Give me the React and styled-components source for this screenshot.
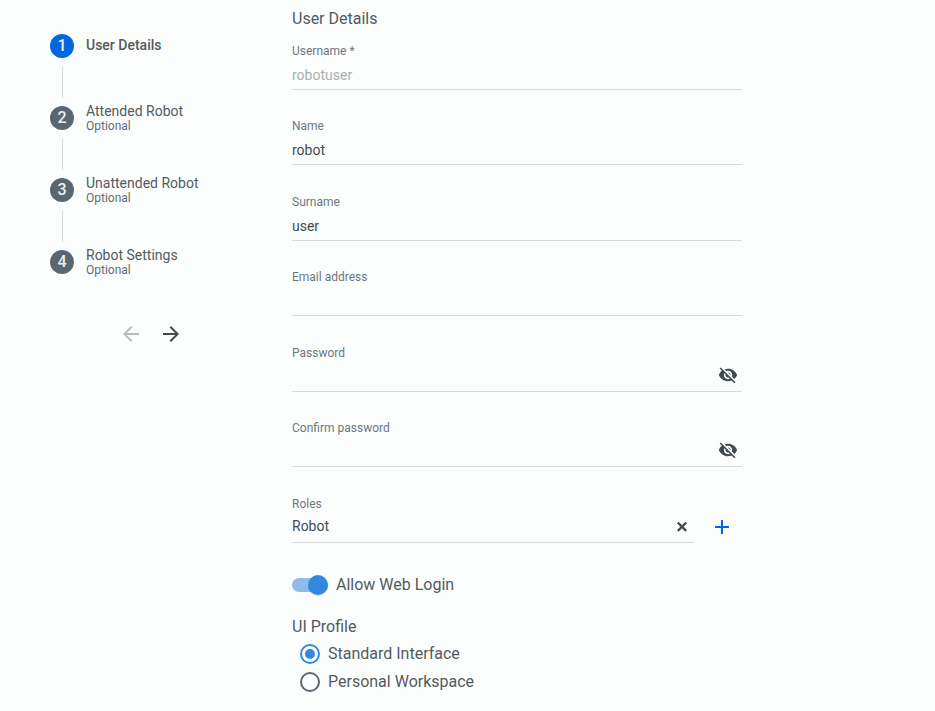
import React from "react";
import styled, { createGlobalStyle } from "styled-components";

const GlobalStyle = createGlobalStyle`
  * { box-sizing: border-box; }
  body {
    margin: 0;
    background: #fcfefd;
    color: #525a60;
    font-family: Roboto, "Liberation Sans", sans-serif;
    overflow: hidden;
  }
`;

const Page = styled.main`
  display: grid;
  grid-template-columns: 242px 450px;
  column-gap: 0;
  width: 935px;
  height: 711px;
  padding-left: 50px;
`;

const Sidebar = styled.aside`
  padding-top: 34px;
`;

const Steps = styled.ol`
  margin: 0;
  padding: 0;
  list-style: none;
`;

const Step = styled.li`
  display: grid;
  grid-template-columns: 24px 1fr;
  grid-template-rows: 24px 32px;
  column-gap: 12px;
  row-gap: 8px;
  height: 72px;
`;

const StepNumber = styled.span`
  display: flex;
  align-items: center;
  justify-content: center;
  width: 24px;
  height: 24px;
  padding-bottom: 1px;
  border-radius: 50%;
  background: ${(p) => (p.$active ? "#0067df" : "#5b6770")};
  color: #eaf0f2;
  font-size: 16px;
  line-height: 19px;
  font-weight: 500;
`;

const StepText = styled.div`
  display: flex;
  flex-direction: column;
  justify-content: center;
  height: ${(p) => (p.$active ? 22 : 24)}px;
  white-space: nowrap;
`;

const StepTitle = styled.span`
  font-size: 14px;
  line-height: 16px;
  font-weight: ${(p) => (p.$active ? 500 : 400)};
`;

const StepNote = styled.span`
  font-size: 12px;
  line-height: 14px;
  color: #5f6b73;
`;

const Connector = styled.span`
  width: 1px;
  height: 32px;
  margin-left: 12px;
  background: #d8dbdc;
`;

const StepNav = styled.nav`
  display: flex;
  gap: 16px;
  padding: 0 0 0 69px;
`;

const IconButton = styled.button`
  display: flex;
  align-items: center;
  justify-content: center;
  width: ${(p) => p.$size || 24}px;
  height: ${(p) => p.$size || 24}px;
  margin-bottom: ${(p) => p.$lift || 0}px;
  padding: 0;
  border: 0;
  background: none;
  color: ${(p) => p.$color || "#424a50"};
  svg { display: block; fill: currentColor; flex: none; }
`;

const Form = styled.section`
  padding-top: 9px;
`;

const Heading = styled.h2`
  margin: 0;
  font-size: 16px;
  line-height: 20px;
  font-weight: 400;
`;

const Fields = styled.div`
  padding-top: 14px;
`;

const Field = styled.div`
  width: ${(p) => p.$width || 450}px;
  height: 47px;
  margin-bottom: 28px;
  border-bottom: 1px solid #d8dbdc;
  &:nth-child(even) { margin-bottom: 29px; }
`;

const Label = styled.div`
  font-size: 12px;
  line-height: 16px;
  color: #6c7780;
`;

const Value = styled.div`
  display: flex;
  align-items: center;
  justify-content: space-between;
  height: 20px;
  margin-top: ${(p) => (p.$raised ? 4 : 6)}px;
  padding-right: ${(p) => p.$inset || 0}px;
  font-size: 14px;
  color: ${(p) => (p.$disabled ? "#aaafae" : "#424a50")};
`;

const RolesRow = styled.div`
  display: flex;
  align-items: flex-start;
  gap: 16px;
  height: 47px;
`;

const AddSlot = styled.div`
  padding-top: 19px;
`;

const ToggleRow = styled.label`
  display: flex;
  align-items: center;
  gap: 8px;
  height: 20px;
  margin-top: 32px;
  font-size: 16px;
`;

const Track = styled.span`
  display: flex;
  align-items: center;
  justify-content: flex-end;
  width: 36px;
  height: 14px;
  border-radius: 8px;
  background: #90bced;
`;

const Knob = styled.span`
  width: 20px;
  height: 20px;
  border-radius: 50%;
  background: #3388df;
  box-shadow: 0 1px 1px rgba(0, 0, 0, 0.14);
  flex: none;
`;

const Profile = styled.div`
  margin-top: 22px;
`;

const RadioGroup = styled.div`
  padding: 7px 0 0 8px;
`;

const Radio = styled.label`
  display: flex;
  align-items: center;
  gap: 8px;
  height: 20px;
  margin-bottom: 8px;
  font-size: 16px;
`;

const RadioMark = styled.span`
  display: grid;
  place-items: center;
  width: 20px;
  height: 20px;
  border: 2px solid ${(p) => (p.$checked ? "#3388df" : "#5b6770")};
  border-radius: 50%;
  &::after {
    content: "";
    width: 10px;
    height: 10px;
    border-radius: 50%;
    background: ${(p) => (p.$checked ? "#3388df" : "transparent")};
  }
`;

const OptionText = styled.span`
  line-height: 20px;
`;

const Icon = ({ path, size = 24 }) => (
  <svg width={size} height={size} viewBox="0 0 24 24" aria-hidden="true">
    <path d={path} />
  </svg>
);

const icons = {
  back: "M20 11H7.83l5.59-5.59L12 4l-8 8 8 8 1.41-1.41L7.83 13H20v-2z",
  forward: "M12 4l-1.41 1.41L16.17 11H4v2h12.17l-5.58 5.59L12 20l8-8z",
  hidden:
    "M12 7c2.76 0 5 2.24 5 5 0 .65-.13 1.26-.36 1.83l2.92 2.92c1.51-1.26 2.7-2.89 3.43-4.75-1.73-4.39-6-7.5-11-7.5-1.4 0-2.74.25-3.98.7l2.16 2.16C10.74 7.13 11.35 7 12 7zM2 4.27l2.28 2.28.46.46C3.08 8.3 1.78 10.02 1 12c1.73 4.39 6 7.5 11 7.5 1.55 0 3.03-.3 4.38-.84l.42.42L19.73 22 21 20.73 3.27 3 2 4.27zM7.53 9.8l1.55 1.55c-.05.21-.08.43-.08.65 0 1.66 1.34 3 3 3 .22 0 .44-.03.65-.08l1.55 1.55c-.67.33-1.41.53-2.2.53-2.76 0-5-2.24-5-5 0-.79.2-1.53.53-2.2zm4.31-.78l3.15 3.15.02-.16c0-1.66-1.34-3-3-3l-.17.01z",
  plus: "M19 13h-6v6h-2v-6H5v-2h6V5h2v6h6v2z",
};

const steps = ["User Details", "Attended Robot", "Unattended Robot", "Robot Settings"];

const fields = [
  { label: "Username *", value: "robotuser", disabled: true },
  { label: "Name", value: "robot" },
  { label: "Surname", value: "user" },
  { label: "Email address" },
  { label: "Password", secret: true },
  { label: "Confirm password", secret: true },
];

export default function App() {
  return (
    <>
      <GlobalStyle />
      <Page>
        <Sidebar>
          <Steps>
            {steps.map((title, i) => (
              <Step key={title}>
                <StepNumber $active={i === 0}>{i + 1}</StepNumber>
                <StepText $active={i === 0}>
                  <StepTitle $active={i === 0}>{title}</StepTitle>
                  {i > 0 && <StepNote>Optional</StepNote>}
                </StepText>
                {i < steps.length - 1 && <Connector />}
              </Step>
            ))}
          </Steps>
          <StepNav>
            <IconButton $color="#b9bcbc" aria-label="Back" disabled>
              <Icon path={icons.back} />
            </IconButton>
            <IconButton aria-label="Next">
              <Icon path={icons.forward} />
            </IconButton>
          </StepNav>
        </Sidebar>
        <Form>
          <Heading>User Details</Heading>
          <Fields>
            {fields.map((f) => (
              <Field key={f.label}>
                <Label>{f.label}</Label>
                <Value $disabled={f.disabled} $inset={4}>
                  <span>{f.value}</span>
                  {f.secret && (
                    <IconButton $size={20} $lift={4} aria-label="Show password">
                      <Icon path={icons.hidden} size={20} />
                    </IconButton>
                  )}
                </Value>
              </Field>
            ))}
            <RolesRow>
              <Field $width={402}>
                <Label>Roles</Label>
                <Value $raised $inset={6}>
                  <span>Robot</span>
                  <IconButton $size={12} aria-label="Clear">
                    <svg width="12" height="12" viewBox="0 0 12 12" aria-hidden="true">
                      <path d="M1.8 2.5l8.4 8.4M10.2 2.5l-8.4 8.4" stroke="currentColor" strokeWidth="2.3" />
                    </svg>
                  </IconButton>
                </Value>
              </Field>
              <AddSlot>
                <IconButton $color="#0067df" aria-label="Add role">
                  <Icon path={icons.plus} />
                </IconButton>
              </AddSlot>
            </RolesRow>
          </Fields>
          <ToggleRow>
            <Track><Knob /></Track>
            <OptionText>Allow Web Login</OptionText>
          </ToggleRow>
          <Profile>
            <Heading as="h3">UI Profile</Heading>
            <RadioGroup>
              <Radio>
                <RadioMark $checked />
                <OptionText>Standard Interface</OptionText>
              </Radio>
              <Radio>
                <RadioMark />
                <OptionText>Personal Workspace</OptionText>
              </Radio>
            </RadioGroup>
          </Profile>
        </Form>
      </Page>
    </>
  );
}
